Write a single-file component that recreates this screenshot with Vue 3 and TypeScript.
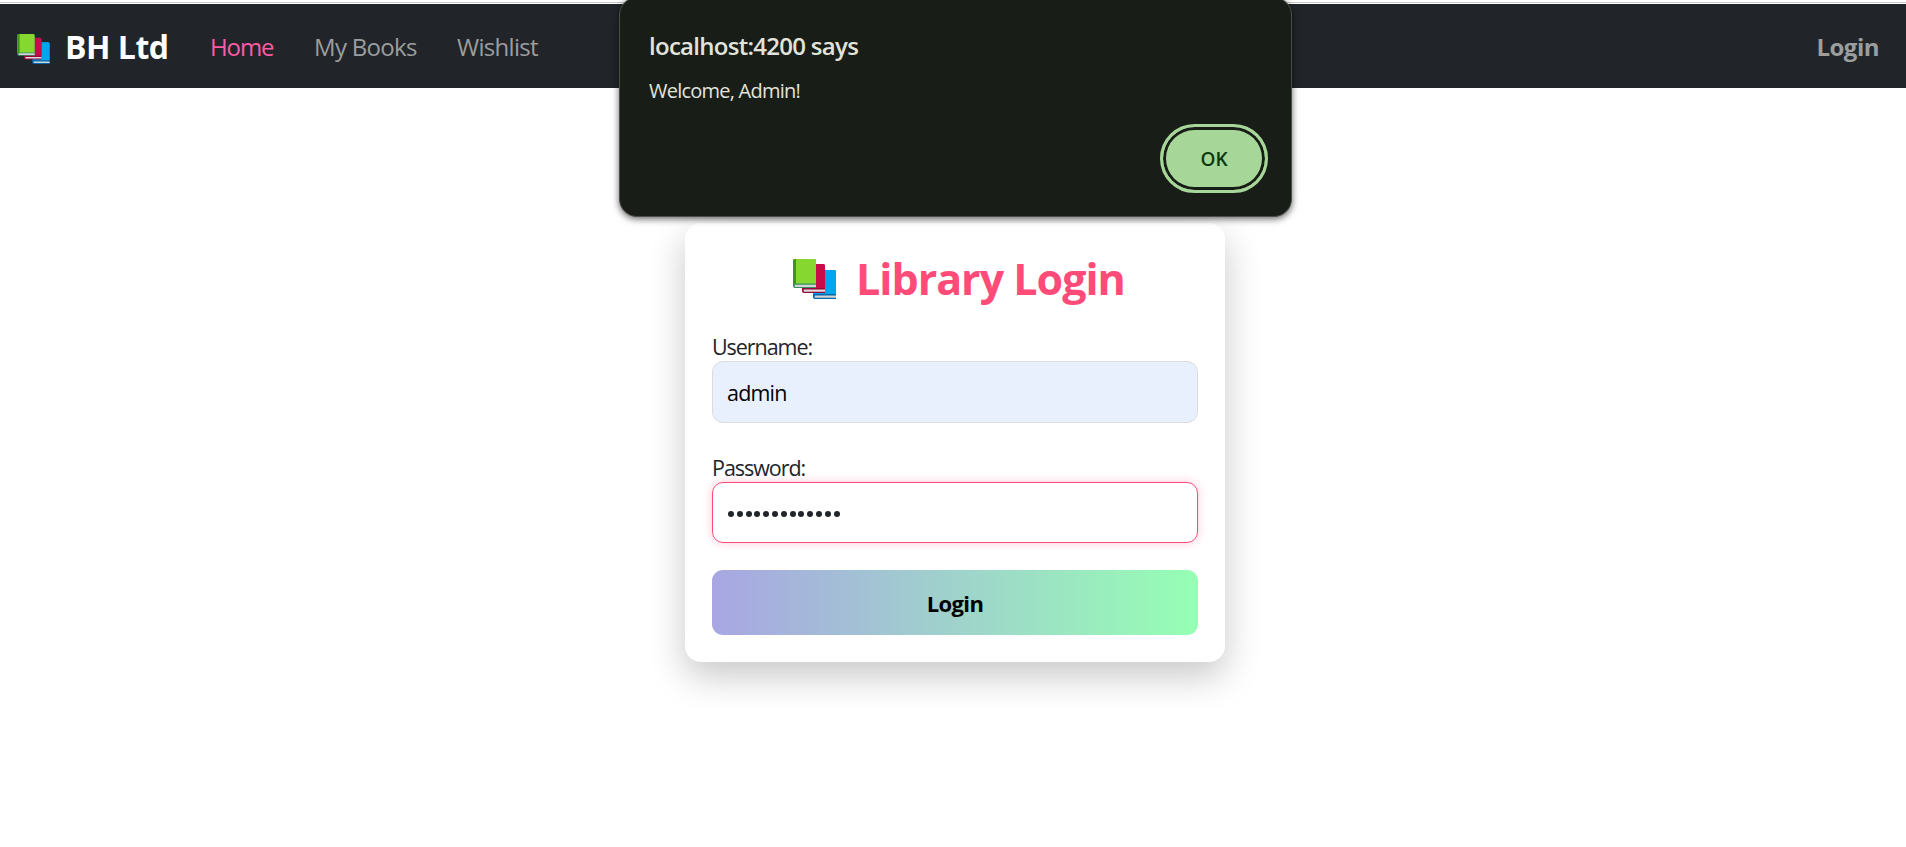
<script setup lang="ts">
import { ref } from 'vue'

interface NavLink {
  label: string
  cls: string
}

const links: NavLink[] = [
  { label: 'Home', cls: 'home active' },
  { label: 'My Books', cls: 'books' },
  { label: 'Wishlist', cls: 'wish' },
]
const username = ref('admin')
const passwordLength = 13
const dialogOpen = ref(true)
</script>

<template>
  <div class="page">
    <svg class="defs" width="0" height="0" aria-hidden="true">
      <symbol id="books" viewBox="0 0 43 40">
        <path d="M20 11h21q2 0 2 2v27H22q-2 0-2-2z" fill="#0067b0" />
        <path d="M22 11h19q2 0 2 2v22H20V13q0-2 2-2z" fill="#00a6ed" />
        <path d="M22 36.500h21v2.300H22q-1-1.200 0-2.300z" fill="#d3d3d3" />
        <path d="M9 5h21q2 0 2 2v27H11q-2 0-2-2z" fill="#990838" />
        <path d="M11 5h19q2 0 2 2v22H9V7q0-2 2-2z" fill="#ca0b4a" />
        <path d="M11 30.500h21v2.300H11q-1-1.200 0-2.300z" fill="#e1d8dc" />
        <path d="M2 0h19q2 0 2 2v27H2q-2 0-2-2V2q0-2 2-2z" fill="#338f63" />
        <path d="M2 0h19q2 0 2 2v22.500H0V2q0-2 2-2z" fill="#86d72f" />
        <path d="M2 0h1v24.500L0 26V2q0-2 2-2z" fill="#44911b" />
        <path d="M2 25.800h21v2.200H2q-1-1.100 0-2.200z" fill="#d3d3d3" />
      </symbol>
    </svg>

    <nav class="navbar">
      <a class="brand">
        <svg class="brand-icon"><use href="#books" /></svg>
        <span>BH Ltd</span>
      </a>
      <a v-for="link in links" :key="link.label" class="nav-link" :class="link.cls">{{ link.label }}</a>
      <a class="nav-login">Login</a>
    </nav>

    <main class="content">
      <form class="card" @submit.prevent>
        <h2 class="title">
          <svg class="title-icon"><use href="#books" /></svg>
          <span>Library Login</span>
        </h2>
        <label class="label">Username:</label>
        <div class="field filled"><span>{{ username }}</span></div>
        <label class="label">Password:</label>
        <div class="field focused">
          <i v-for="n in passwordLength" :key="n" class="dot"></i>
        </div>
        <button class="submit" type="submit"><span>Login</span></button>
      </form>
    </main>

    <div v-if="dialogOpen" class="dialog" role="alertdialog">
      <div class="dialog-title"><span>localhost:4200 says</span></div>
      <div class="dialog-text"><span>Welcome, Admin!</span></div>
      <button class="ok" type="button" @click="dialogOpen = false"><span>OK</span></button>
    </div>
  </div>
</template>

<style>
body {
  margin: 0;
  background: #fff;
  overflow: hidden;
}
</style>

<style scoped>
* {
  box-sizing: border-box;
}
.page {
  position: relative;
  height: 847px;
  overflow: hidden;
  padding-top: 2px;
  background: #fff;
  font-family: 'Open Sans', 'Noto Sans', sans-serif;
  color: #212529;
}
.defs {
  position: absolute;
}
.navbar {
  display: flex;
  align-items: center;
  height: 86px;
  padding: 2px 27px 0 17px;
  border-top: 1px solid #c8c8c8;
  background: #212529;
  box-shadow: inset 0 1px #fff;
  white-space: nowrap;
  line-height: 36px;
}
.brand {
  display: flex;
  align-items: center;
  width: 193px;
  color: #fff;
  font-size: 32px;
  font-weight: 700;
  letter-spacing: -0.5px;
}
.brand-icon {
  width: 33px;
  height: 30px;
  margin: 4px 15px 0 0;
}
.nav-link {
  font-size: 24px;
  letter-spacing: -0.7px;
  color: #9b9d9e;
}
.nav-link.home {
  width: 104px;
  letter-spacing: -1.1px;
}
.nav-link.books {
  width: 143px;
}
.nav-link.active {
  color: #ff5ba7;
}
.nav-login {
  margin-left: auto;
  color: #9b9d9e;
  font-size: 24px;
  font-weight: 700;
  letter-spacing: -0.5px;
}
.content {
  display: flex;
  justify-content: center;
  padding: 135px 0 0 4px;
}
.card {
  width: 540px;
  height: 439px;
  padding: 25px 27px 27px;
  border-radius: 16px;
  background: #fff;
  box-shadow: 0 14px 36px rgba(0, 0, 0, 0.22);
}
.title {
  display: flex;
  align-items: center;
  height: 60px;
  margin: 0 0 23px 81px;
  color: #ff4b78;
  font-size: 43px;
  font-weight: 700;
  line-height: 59px;
  letter-spacing: -1px;
  white-space: nowrap;
}
.title-icon {
  width: 43px;
  height: 40px;
  margin: 2px 20px 0 0;
}
.label {
  display: block;
  height: 30px;
  font-size: 21.5px;
  line-height: 31px;
  letter-spacing: -1.05px;
}
.field {
  display: flex;
  align-items: center;
  height: 62px;
  padding: 0 14px;
  border: 1px solid #dcdcdc;
  border-radius: 11px;
  font-size: 21.5px;
  letter-spacing: -0.8px;
}
.field.filled {
  margin-bottom: 29px;
  background: #e8f0fe;
  color: #000;
}
.field.focused {
  gap: 2.800px;
  height: 61px;
  padding: 3px 15px 0;
  border-color: #ff4b78;
  box-shadow: 0 0 10px rgba(255, 75, 120, 0.3);
}
.dot {
  width: 6px;
  height: 6px;
  border-radius: 50%;
  background: #212529;
}
.submit {
  display: block;
  width: 486px;
  height: 65px;
  margin-top: 27px;
  padding: 0;
  border: 0;
  border-radius: 11px;
  background: linear-gradient(90deg, #a8a6e3, #96ffb4);
  color: #000;
  font: 700 22px 'Open Sans', sans-serif;
  letter-spacing: -0.6px;
}
.dialog {
  position: absolute;
  top: -3px;
  left: 619px;
  display: flex;
  flex-direction: column;
  width: 673px;
  height: 220px;
  padding: 30px 23px 23px 29px;
  border: 1px solid #4b4f48;
  border-radius: 18px;
  background: #191d17;
  box-shadow: 0 2px 7px rgba(0, 0, 0, 0.6);
  color: #e2e3dc;
}
.dialog-title {
  height: 36px;
  font-size: 24px;
  font-weight: 600;
  line-height: 36px;
  letter-spacing: -0.72px;
}
.dialog-text {
  margin-top: 12px;
  font-size: 20px;
  line-height: 30px;
  letter-spacing: -0.77px;
}
.ok {
  align-self: flex-end;
  width: 108px;
  height: 69px;
  margin-top: 18px;
  padding: 0;
  border: 3px solid #a6d799;
  border-radius: 35px;
  background: #a6d799;
  box-shadow: inset 0 0 0 3px #191d17;
  color: #0b390b;
  font: 600 19px 'Open Sans', sans-serif;
}
</style>
